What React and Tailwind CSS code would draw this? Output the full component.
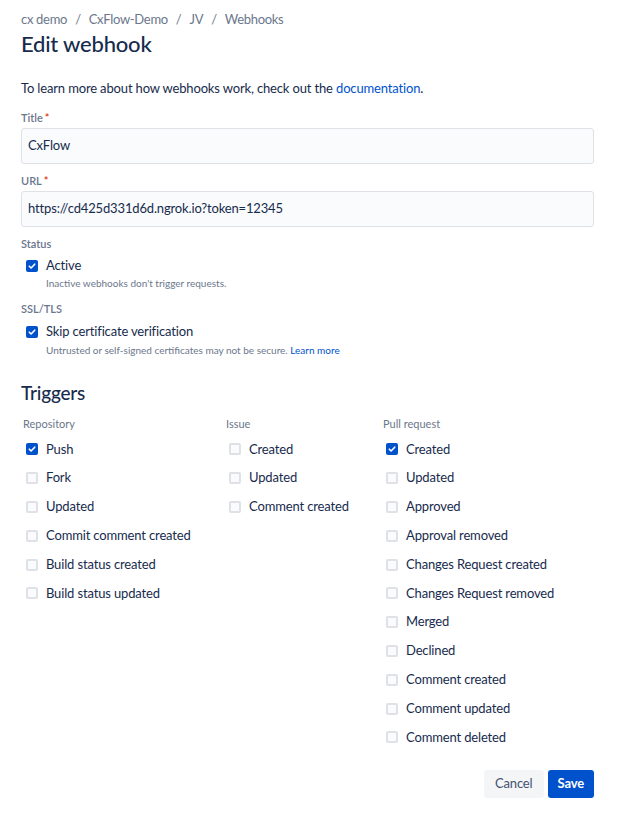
import React from 'react';

const font = { fontFamily: '"Lato", "Noto Sans", sans-serif' };

const Check = ({ checked }) => (
  <span
    className={`flex h-[12px] w-[12px] shrink-0 items-center justify-center rounded-[2px] ${
      checked ? 'bg-[#0052CC]' : 'border-2 border-[#DFE1E6] bg-[#FAFBFC]'
    }`}
  >
    {checked && (
      <svg width="8" height="8" viewBox="0 0 8 8" fill="none">
        <path d="M1.3 4.2 3.1 6 6.7 2.2" stroke="white" strokeWidth="1.6" strokeLinecap="round" strokeLinejoin="round" />
      </svg>
    )}
  </span>
);

const TriggerRow = ({ label, checked }) => (
  <div className="flex h-[28.8px] items-center pl-[3px]">
    <Check checked={checked} />
    <span className="ml-[8px] text-[13px] tracking-[-0.15px] text-[#172B4D]">{label}</span>
  </div>
);

const columns = [
  {
    name: 'Repository',
    items: [
      ['Push', true],
      ['Fork'],
      ['Updated'],
      ['Commit comment created'],
      ['Build status created'],
      ['Build status updated'],
    ],
  },
  {
    name: 'Issue',
    items: [['Created'], ['Updated'], ['Comment created']],
  },
  {
    name: 'Pull request',
    items: [
      ['Created', true],
      ['Updated'],
      ['Approved'],
      ['Approval removed'],
      ['Changes Request created'],
      ['Changes Request removed'],
      ['Merged'],
      ['Declined'],
      ['Comment created'],
      ['Comment updated'],
      ['Comment deleted'],
    ],
  },
];

const Label = ({ children, required }) => (
  <div className="h-[16px] text-[11px] font-semibold leading-[16px] text-[#6B778C]">
    {children}
    {required && <span className="ml-[2px] text-[#DE350B]">*</span>}
  </div>
);

const Input = ({ value }) => (
  <div className="mt-[2px] flex h-[36px] items-center rounded-[3px] border border-[#DFE1E6] bg-[#FAFBFC] px-[6px] text-[13px] tracking-[-0.15px] text-[#172B4D]">
    {value}
  </div>
);

export default function App() {
  const crumbs = ['cx demo', 'CxFlow-Demo', 'JV', 'Webhooks'];
  return (
    <div style={font} className="min-h-screen w-[621px] bg-white pl-[21px] pr-[27px] pt-[10px] text-[#172B4D]">
      <div className="flex h-[20px] items-center text-[13px] tracking-[-0.3px] text-[#6B778C]">
        {crumbs.map((c, i) => (
          <React.Fragment key={c}>
            {i > 0 && <span className="mx-[8px]">/</span>}
            <span>{c}</span>
          </React.Fragment>
        ))}
      </div>
      <h1 className="h-[28px] text-[22px] font-medium leading-[28px] tracking-[-0.2px] text-[#172B4D]">
        Edit webhook
      </h1>

      <p className="mt-[20px] h-[20px] text-[13px] leading-[20px] tracking-[-0.15px]">
        To learn more about how webhooks work, check out the{' '}
        <span className="text-[#0052CC]">documentation</span>.
      </p>

      <div className="mt-[12px]">
        <Label required>Title</Label>
        <Input value="CxFlow" />
      </div>
      <div className="mt-[9px]">
        <Label required>URL</Label>
        <Input value="https://cd425d331d6d.ngrok.io?token=12345" />
      </div>

      <div className="mt-[9px]">
        <Label>Status</Label>
        <div className="mt-[4px] flex h-[20px] items-center pl-[5px]">
          <Check checked />
          <span className="ml-[8px] text-[13px] tracking-[-0.15px]">Active</span>
        </div>
        <div className="pl-[25px] text-[10px] leading-[14px] text-[#6B778C]">
          Inactive webhooks don't trigger requests.
        </div>
      </div>

      <div className="mt-[11px]">
        <Label>SSL/TLS</Label>
        <div className="mt-[5px] flex h-[20px] items-center pl-[5px]">
          <Check checked />
          <span className="ml-[8px] text-[13px] tracking-[-0.15px]">Skip certificate verification</span>
        </div>
        <div className="mt-[1px] pl-[25px] text-[10px] leading-[14px] text-[#6B778C]">
          Untrusted or self-signed certificates may not be secure.{' '}
          <span className="text-[#0052CC]">Learn more</span>
        </div>
      </div>

      <h2 className="mt-[24px] h-[24px] text-[19px] font-medium leading-[24px] tracking-[-0.2px]">Triggers</h2>

      <div className="mt-[11px] grid grid-cols-[203px_157px_1fr] pl-[2px]">
        {columns.map((col) => (
          <div key={col.name}>
            <div className="h-[16px] text-[11px] leading-[16px] text-[#6B778C]">{col.name}</div>
            <div className="mt-[3px]">
              {col.items.map(([label, checked]) => (
                <TriggerRow key={label} label={label} checked={checked} />
              ))}
            </div>
          </div>
        ))}
      </div>

      <div className="mt-[18px] flex justify-end gap-[4px]">
        <button className="h-[28px] rounded-[3px] bg-[#F4F5F7] px-[11px] text-[13px] tracking-[-0.15px] text-[#42526E]">
          Cancel
        </button>
        <button className="h-[28px] rounded-[3px] bg-[#0052CC] px-[10px] text-[13px] font-bold tracking-[-0.15px] text-white">
          Save
        </button>
      </div>
    </div>
  );
}
